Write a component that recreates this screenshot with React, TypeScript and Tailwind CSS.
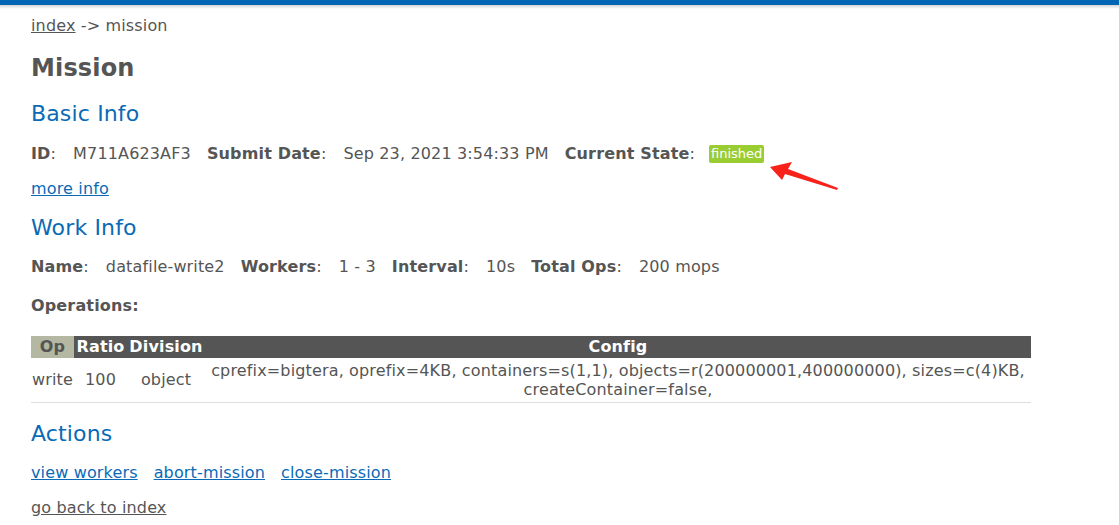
const FONT = "font-['DejaVu_Sans',Verdana,sans-serif]";

function Field({ label, value }: { label: string; value: string }) {
  return (
    <span className="mr-[16px] inline-block">
      <b className="font-bold">{label}</b>:<span className="ml-[17px]">{value}</span>
    </span>
  );
}

function Arrow() {
  return (
    <svg
      className="pointer-events-none absolute left-[766px] top-[160px]"
      width="76"
      height="34"
      viewBox="0 0 76 34"
    >
      <path d="M4 7 L26 2 L22 9 L72 28 L71 30 L19 14 L16 20 Z" fill="#f8221a" />
    </svg>
  );
}

export default function App() {
  return (
    <div className={`relative min-h-[525px] bg-white text-[#555] tracking-[0.15px] ${FONT}`}>
      {/* top bar */}
      <div className="h-[5px] bg-[#0066b3]" />
      <div className="h-[4px] bg-gradient-to-b from-[#d4d4d4] to-white" />

      <div className="px-[31px] text-[16px] leading-[20px]">
        <div className="mt-[7px]">
          <a href="#" className="text-[#555] underline">index</a> -&gt; mission
        </div>

        <h1 className="mt-[17px] text-[24px] font-bold leading-[30px]">Mission</h1>

        <h2 className="mt-[17px] text-[22px] leading-[28px] text-[#0a6ab6]">Basic Info</h2>
        <div className="mt-[16px] flex items-center whitespace-nowrap">
          <Field label="ID" value="M711A623AF3" />
          <Field label="Submit Date" value="Sep 23, 2021 3:54:33 PM" />
          <span className="inline-flex items-center">
            <b className="font-bold">Current State</b>:
            <span className="ml-[14px] rounded-[2px] bg-[#9acd32] px-[2px] text-[13px] leading-[18px] tracking-normal text-white">
              finished
            </span>
          </span>
        </div>
        <div className="mt-[15px]">
          <a href="#" className="text-[#0a6ab6] underline">more info</a>
        </div>

        <h2 className="mt-[15px] text-[22px] leading-[28px] text-[#0a6ab6]">Work Info</h2>
        <div className="mt-[15px] whitespace-nowrap">
          <Field label="Name" value="datafile-write2" />
          <Field label="Workers" value="1 - 3" />
          <Field label="Interval" value="10s" />
          <Field label="Total Ops" value="200 mops" />
        </div>
        <div className="mt-[19px] font-bold">Operations:</div>

        <table className="mt-[20px] w-[1000px] border-collapse text-[16px]">
          <thead>
            <tr className="h-[22px] font-bold leading-[20px]">
              <th className="w-[43px] bg-[#b4b8a3] text-center text-[#555]">Op</th>
              <th className="w-[53px] bg-[#555] text-center text-white">Ratio</th>
              <th className="w-[78px] bg-[#555] text-center text-white">Division</th>
              <th className="bg-[#555] text-center text-white">Config</th>
            </tr>
          </thead>
          <tbody>
            <tr className="border-b border-[#ddd]">
              <td className="py-[12px] text-center align-middle">write</td>
              <td className="text-center align-middle">100</td>
              <td className="text-center align-middle">object</td>
              <td className="px-[4px] py-[2px] text-center leading-[19px]">
                cprefix=bigtera, oprefix=4KB, containers=s(1,1), objects=r(200000001,400000000), sizes=c(4)KB,
                createContainer=false,
              </td>
            </tr>
          </tbody>
        </table>

        <h2 className="mt-[17px] text-[22px] leading-[28px] text-[#0a6ab6]">Actions</h2>
        <div className="mt-[15px] flex gap-[16px]">
          <a href="#" className="text-[#0a6ab6] underline">view workers</a>
          <a href="#" className="text-[#0a6ab6] underline">abort-mission</a>
          <a href="#" className="text-[#0a6ab6] underline">close-mission</a>
        </div>
        <div className="mt-[15px]">
          <a href="#" className="text-[#555] underline">go back to index</a>
        </div>
      </div>

      <Arrow />
    </div>
  );
}
